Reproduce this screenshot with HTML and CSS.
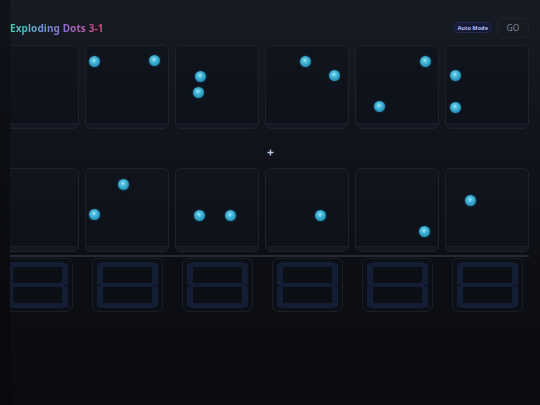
FILE: index.html
```html
<!DOCTYPE html>
<html>
<head>
<meta charset="utf-8">
<link rel="stylesheet" href="styles.css">
</head>
<body>
<div class="app">
  <header class="header">
    <h1 class="title">Exploding Dots 3-1</h1>
    <div class="controls">
      <span class="pill">Auto Mode</span>
      <button class="go">GO</button>
    </div>
  </header>

  <div class="board">
    <div class="row">
      <div class="card"><div class="band"></div></div>
      <div class="card"><i class="dot" style="left:9px;top:16px"></i><i class="dot" style="left:69px;top:15px"></i><div class="band"></div></div>
      <div class="card"><i class="dot" style="left:25px;top:31px"></i><i class="dot" style="left:23px;top:47px"></i><div class="band"></div></div>
      <div class="card"><i class="dot" style="left:40px;top:16px"></i><i class="dot" style="left:69px;top:30px"></i><div class="band"></div></div>
      <div class="card"><i class="dot" style="left:70px;top:16px"></i><i class="dot" style="left:24px;top:61px"></i><div class="band"></div></div>
      <div class="card"><i class="dot" style="left:10px;top:30px"></i><i class="dot" style="left:10px;top:62px"></i><div class="band"></div></div>
    </div>

    <div class="middle">
      <svg class="cross" width="7" height="7" viewBox="0 0 7 7"><path d="M3.5 0.5V6.5M0.5 3.5H6.5" stroke="#b9c8ea" stroke-width="1.3"/></svg>
    </div>

    <div class="row">
      <div class="card"><div class="band"></div></div>
      <div class="card"><i class="dot" style="left:38px;top:16px"></i><i class="dot" style="left:9px;top:46px"></i><div class="band"></div></div>
      <div class="card"><i class="dot" style="left:24px;top:47px"></i><i class="dot" style="left:55px;top:47px"></i><div class="band"></div></div>
      <div class="card"><i class="dot" style="left:55px;top:47px"></i><div class="band"></div></div>
      <div class="card"><i class="dot" style="left:69px;top:63px"></i><div class="band"></div></div>
      <div class="card"><i class="dot" style="left:25px;top:32px"></i><div class="band"></div></div>
    </div>

    <div class="sep"></div>

    <div class="row digits">
      <div class="col"><div class="digit"><svg width="61" height="46" viewBox="0 0 61 46"><g fill="#131d33"><rect x="4" y="0" width="53" height="5" rx="1.5"/><rect x="0" y="1" width="6" height="22" rx="1.5"/><rect x="55" y="1" width="6" height="22" rx="1.5"/><rect x="4" y="21" width="53" height="4" rx="1.5"/><rect x="0" y="24" width="6" height="21" rx="1.5"/><rect x="55" y="24" width="6" height="21" rx="1.5"/><rect x="4" y="41" width="53" height="5" rx="1.5"/></g></svg></div></div>
      <div class="col"><div class="digit"><svg width="61" height="46" viewBox="0 0 61 46"><g fill="#131d33"><rect x="4" y="0" width="53" height="5" rx="1.5"/><rect x="0" y="1" width="6" height="22" rx="1.5"/><rect x="55" y="1" width="6" height="22" rx="1.5"/><rect x="4" y="21" width="53" height="4" rx="1.5"/><rect x="0" y="24" width="6" height="21" rx="1.5"/><rect x="55" y="24" width="6" height="21" rx="1.5"/><rect x="4" y="41" width="53" height="5" rx="1.5"/></g></svg></div></div>
      <div class="col"><div class="digit"><svg width="61" height="46" viewBox="0 0 61 46"><g fill="#131d33"><rect x="4" y="0" width="53" height="5" rx="1.5"/><rect x="0" y="1" width="6" height="22" rx="1.5"/><rect x="55" y="1" width="6" height="22" rx="1.5"/><rect x="4" y="21" width="53" height="4" rx="1.5"/><rect x="0" y="24" width="6" height="21" rx="1.5"/><rect x="55" y="24" width="6" height="21" rx="1.5"/><rect x="4" y="41" width="53" height="5" rx="1.5"/></g></svg></div></div>
      <div class="col"><div class="digit"><svg width="61" height="46" viewBox="0 0 61 46"><g fill="#131d33"><rect x="4" y="0" width="53" height="5" rx="1.5"/><rect x="0" y="1" width="6" height="22" rx="1.5"/><rect x="55" y="1" width="6" height="22" rx="1.5"/><rect x="4" y="21" width="53" height="4" rx="1.5"/><rect x="0" y="24" width="6" height="21" rx="1.5"/><rect x="55" y="24" width="6" height="21" rx="1.5"/><rect x="4" y="41" width="53" height="5" rx="1.5"/></g></svg></div></div>
      <div class="col"><div class="digit"><svg width="61" height="46" viewBox="0 0 61 46"><g fill="#131d33"><rect x="4" y="0" width="53" height="5" rx="1.5"/><rect x="0" y="1" width="6" height="22" rx="1.5"/><rect x="55" y="1" width="6" height="22" rx="1.5"/><rect x="4" y="21" width="53" height="4" rx="1.5"/><rect x="0" y="24" width="6" height="21" rx="1.5"/><rect x="55" y="24" width="6" height="21" rx="1.5"/><rect x="4" y="41" width="53" height="5" rx="1.5"/></g></svg></div></div>
      <div class="col"><div class="digit"><svg width="61" height="46" viewBox="0 0 61 46"><g fill="#131d33"><rect x="4" y="0" width="53" height="5" rx="1.5"/><rect x="0" y="1" width="6" height="22" rx="1.5"/><rect x="55" y="1" width="6" height="22" rx="1.5"/><rect x="4" y="21" width="53" height="4" rx="1.5"/><rect x="0" y="24" width="6" height="21" rx="1.5"/><rect x="55" y="24" width="6" height="21" rx="1.5"/><rect x="4" y="41" width="53" height="5" rx="1.5"/></g></svg></div></div>
    </div>
  </div>
</div>
</body>
</html>
```

FILE: styles.css
```css
* { box-sizing: border-box; }
html {
  margin: 0;
  padding: 0;
  background: #0a0b0f;
}
body {
  margin: 0;
  padding: 0;
  width: 540px;
  height: 405px;
  overflow: hidden;
  background: linear-gradient(180deg, #171b24 0px, #12151d 110px, #0d0f15 250px, #0a0b0f 405px);
  font-family: "Noto Sans", "Open Sans", sans-serif;
}
.app {
  height: 405px;
  padding: 0 11px 0 10px;
  background: linear-gradient(90deg, rgba(5,6,9,0.4) 0, rgba(5,6,9,0.4) 10px, transparent 10px);
}
.header {
  height: 45px;
  display: flex;
  align-items: center;
  justify-content: space-between;
  padding-top: 10px;
}
.title {
  margin: 0;
  font-size: 10px;
  font-weight: 700;
  letter-spacing: 0.1px;
  background: linear-gradient(90deg, #3ccdb0 0%, #6aa3cf 30%, #8d6fd8 55%, #b55aa8 78%, #e3436f 100%);
  -webkit-background-clip: text;
  background-clip: text;
  color: transparent;
}
.controls {
  display: flex;
  align-items: center;
  gap: 5px;
}
.pill {
  display: inline-flex;
  align-items: center;
  height: 11px;
  padding: 0 3px;
  border-radius: 6px;
  background: #151a36;
  border: 1px solid #222a52;
  color: #b3bef3;
  font-size: 5.6px;
  font-weight: 700;
}
.go {
  width: 32px;
  height: 20px;
  border-radius: 5px;
  border: 1px solid #1f232d;
  background: #161a22;
  color: #80858f;
  font-family: "Noto Sans", sans-serif;
  font-size: 8.5px;
  padding: 0;
}
.board { overflow: hidden; }
.row {
  display: flex;
  justify-content: flex-end;
  gap: 6px;
}
.card {
  position: relative;
  flex: 0 0 84px;
  height: 84px;
  border-radius: 6px;
  border: 1px solid #1d222d;
  background: linear-gradient(180deg, #10141d 0%, #0d1119 100%);
  overflow: hidden;
}
.band {
  position: absolute;
  left: 0; right: 0; bottom: 0;
  height: 5px;
  background: #141923;
  border-top: 1px solid #1a1f2a;
}
.dot {
  position: absolute;
  width: 11px;
  height: 11px;
  margin: -6px 0 0 -6px;
  border-radius: 50%;
  background: radial-gradient(circle at 45% 40%, #b5ecf8 0%, #55c3e2 22%, #2c9dc4 55%, #1f7ea4 100%);
  box-shadow: 0 0 3px rgba(40,160,200,0.35);
}
.middle {
  height: 39px;
  display: flex;
  justify-content: center;
  align-items: center;
  padding-top: 7px;
  padding-left: 1px;
}
.cross { display: block; }
.sep {
  height: 2px;
  margin: 3px 0 1px;
  background: #262a34;
}
.col {
  flex: 0 0 84px;
  display: flex;
  justify-content: center;
}
.digit {
  width: 71px;
  height: 54px;
  border-radius: 6px;
  border: 1px solid #1a1e27;
  background: #0c0f16;
  display: flex;
  align-items: center;
  justify-content: center;
  padding-left: 1px;
}
.digit svg { display: block; }
```
